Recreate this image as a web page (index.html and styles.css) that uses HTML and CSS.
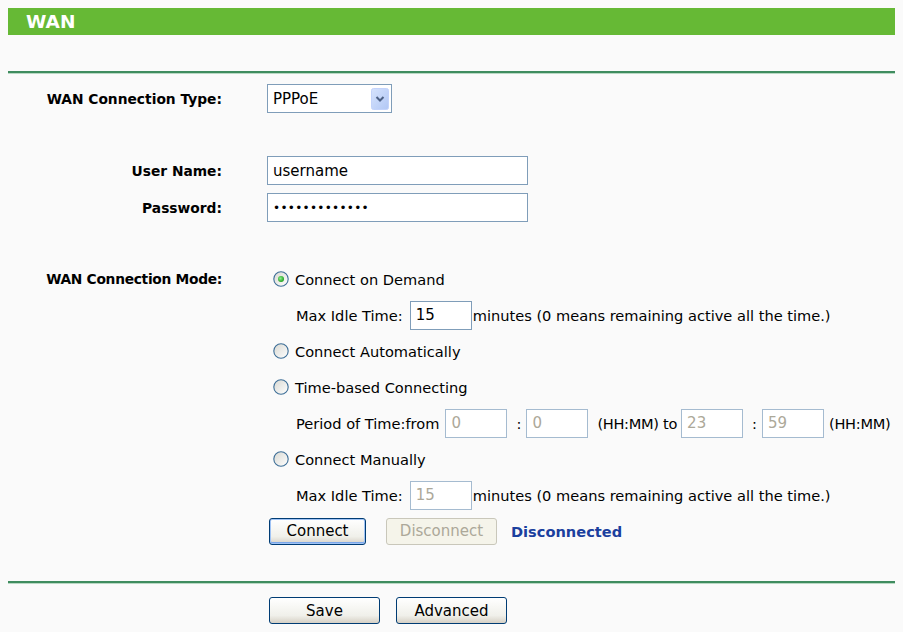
FILE: index.html
```html
<!DOCTYPE html>
<html>
<head>
<meta charset="utf-8">
<title>WAN</title>
<link rel="stylesheet" href="styles.css">
</head>
<body>
<div class="titlebar">WAN</div>
<div class="rule rule-top"></div>

<div class="row row-type">
  <div class="label">WAN Connection Type:</div>
  <div class="value">
    <div class="select">
      <span class="select-text">PPPoE</span>
      <svg class="select-btn" width="18" height="22" viewBox="0 0 18 22">
        <defs>
          <linearGradient id="sg" x1="0" y1="0" x2="1" y2="1">
            <stop offset="0" stop-color="#d6e3fd"/>
            <stop offset="1" stop-color="#b1c7f5"/>
          </linearGradient>
        </defs>
        <rect x="0.5" y="0.5" width="17" height="21" rx="2" fill="url(#sg)" stroke="#c3d3fb"/>
        <path d="M5.5 9 L9 12.5 L12.5 9" fill="none" stroke="#4d6185" stroke-width="2"/>
      </svg>
    </div>
  </div>
</div>

<div class="row row-user">
  <div class="label">User Name:</div>
  <div class="value"><div class="input wide">username</div></div>
</div>
<div class="row row-pass">
  <div class="label">Password:</div>
  <div class="value"><div class="input wide dots">&#8226;&#8226;&#8226;&#8226;&#8226;&#8226;&#8226;&#8226;&#8226;&#8226;&#8226;&#8226;&#8226;</div></div>
</div>

<div class="row row-mode">
  <div class="label mode-label">WAN Connection Mode:</div>
  <div class="value options">
    <div class="opt">
      <svg class="radio" width="16" height="16" viewBox="0 0 16 16">
        <defs>
          <linearGradient id="rg" x1="0" y1="0" x2="1" y2="1">
            <stop offset="0" stop-color="#d8d8d2"/>
            <stop offset="1" stop-color="#ffffff"/>
          </linearGradient>
          <radialGradient id="dg" cx="0.4" cy="0.4" r="0.6">
            <stop offset="0" stop-color="#8ef08e"/>
            <stop offset="1" stop-color="#21a121"/>
          </radialGradient>
        </defs>
        <circle cx="8" cy="8" r="7.2" fill="url(#rg)" stroke="#3d6e97" stroke-width="1.1"/>
        <circle cx="8" cy="8" r="3" fill="url(#dg)"/>
      </svg>
      <span>Connect on Demand</span>
    </div>
    <div class="opt sub">
      <span>Max Idle Time:</span>
      <div class="input small idle">15</div>
      <span>minutes (0 means remaining active all the time.)</span>
    </div>
    <div class="opt">
      <svg class="radio" width="16" height="16" viewBox="0 0 16 16">
        <circle cx="8" cy="8" r="7.2" fill="url(#rg)" stroke="#3d6e97" stroke-width="1.1"/>
      </svg>
      <span>Connect Automatically</span>
    </div>
    <div class="opt">
      <svg class="radio" width="16" height="16" viewBox="0 0 16 16">
        <circle cx="8" cy="8" r="7.2" fill="url(#rg)" stroke="#3d6e97" stroke-width="1.1"/>
      </svg>
      <span>Time-based Connecting</span>
    </div>
    <div class="opt sub period">
      <span class="ptxt">Period of Time:from</span>
      <div class="input small disabled first">0</div>
      <span class="colon">:</span>
      <div class="input small disabled">0</div>
      <span class="hh">(HH:MM) to</span>
      <div class="input small disabled">23</div>
      <span class="colon">:</span>
      <div class="input small disabled">59</div>
      <span class="hh2">(HH:MM)</span>
    </div>
    <div class="opt">
      <svg class="radio" width="16" height="16" viewBox="0 0 16 16">
        <circle cx="8" cy="8" r="7.2" fill="url(#rg)" stroke="#3d6e97" stroke-width="1.1"/>
      </svg>
      <span>Connect Manually</span>
    </div>
    <div class="opt sub">
      <span>Max Idle Time:</span>
      <div class="input small idle disabled">15</div>
      <span>minutes (0 means remaining active all the time.)</span>
    </div>
    <div class="opt buttons">
      <button class="btn btn-focus connect">Connect</button>
      <button class="btn btn-disabled disconnect">Disconnect</button>
      <span class="status">Disconnected</span>
    </div>
  </div>
</div>

<div class="rule rule-bottom"></div>

<div class="row row-save">
  <div class="label"></div>
  <div class="value save-buttons">
    <button class="btn save">Save</button>
    <button class="btn advanced">Advanced</button>
  </div>
</div>
</body>
</html>
```

FILE: styles.css
```css
html, body {
  background: #fafafa;
}
body {
  margin: 8px;
  font-family: "DejaVu Sans", "Liberation Sans", sans-serif;
  font-size: 14.6px;
  color: #000;
}
.titlebar {
  height: 27px;
  line-height: 27px;
  background: #66b935;
  color: #fff;
  font-weight: bold;
  font-size: 18.5px;
  padding-left: 18px;
}
.rule {
  height: 2px;
  background: #3f8c5f;
  border-bottom: 1px solid #b9d9c4;
}
.rule-top { margin-top: 36px; }
.rule-bottom { margin-top: 32px; }

.row {
  display: flex;
  align-items: center;
}
.label {
  width: 214px;
  flex: none;
  text-align: right;
  font-weight: bold;
  font-size: 13.8px;
  white-space: nowrap;
}
.value {
  margin-left: 45px;
  display: flex;
  align-items: center;
  flex: none;
}
.row-type { margin-top: 10px; height: 29px; }
.row-user { margin-top: 43px; height: 29px; }
.row-pass { margin-top: 8px; height: 29px; }
.row-mode { margin-top: 39px; align-items: flex-start; }
.mode-label { line-height: 36px; letter-spacing: -0.3px; }
.row-save { margin-top: 13px; height: 27px; }

.select {
  box-sizing: border-box;
  width: 125px;
  height: 29px;
  border: 1px solid #7f9db9;
  background: #fff;
  display: flex;
  align-items: center;
  justify-content: space-between;
  padding: 0 2px 0 5px;
  font-size: 15px;
}
.select-btn { display: block; }

.input {
  box-sizing: border-box;
  height: 29px;
  border: 1px solid #7f9db9;
  background: #fff;
  padding-left: 5px;
  display: flex;
  align-items: center;
  font-size: 15px;
  flex: none;
}
.wide { width: 261px; }
.dots { font-size: 12px; letter-spacing: 0.3px; }
.small { width: 62px; }
.disabled { color: #aca899; border-color: #a5bbd0; }

.options {
  flex-direction: column;
  align-items: flex-start;
}
.opt {
  height: 36px;
  display: flex;
  align-items: center;
  white-space: nowrap;
}
.radio {
  display: block;
  margin-left: 6px;
  margin-right: 6px;
  flex: none;
}
.sub { padding-left: 29px; }
.idle { margin-left: 7px; margin-right: 1px; }
.period .first { margin-left: 6px; }
.colon { margin: 0 5px 0 9px; }
.hh { margin: 0 4px 0 9px; letter-spacing: -0.3px; }
.hh2 { margin-left: 5px; letter-spacing: -0.3px; }

.btn {
  box-sizing: border-box;
  height: 27px;
  font-family: "DejaVu Sans", "Liberation Sans", sans-serif;
  font-size: 15px;
  color: #000;
  border: 1px solid #003c74;
  border-radius: 3px;
  background: linear-gradient(#ffffff, #f0f0ea 70%, #d6d0c5);
  padding: 0;
}
.btn-focus {
  box-shadow: inset 0 0 0 1px #9fc3f5, inset 0 -1px 0 1px #7aa6ea;
}
.btn-disabled {
  color: #aca899;
  border-color: #c9c7ba;
  background: #f5f4ea;
}
.buttons { padding-left: 2px; }
.connect { width: 97px; }
.disconnect { width: 111px; margin-left: 20px; }
.status {
  margin-left: 14px;
  color: #1b3f9e;
  font-weight: bold;
  font-size: 14.6px;
}
.save-buttons { padding-left: 2px; }
.save { width: 111px; }
.advanced { width: 111px; margin-left: 16px; }
```
